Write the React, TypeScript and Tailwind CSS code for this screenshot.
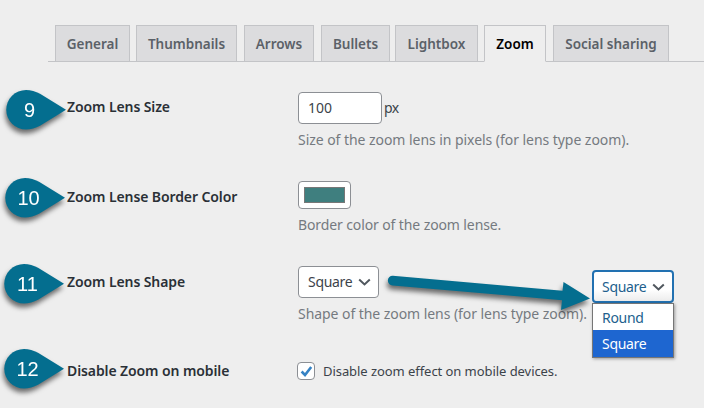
import type { ReactNode } from "react";
import clsx from "clsx";

const tabs = [
  { label: "General", className: "w-[75px] mr-[6px]" },
  { label: "Thumbnails", className: "w-[101px] mr-[7px]" },
  { label: "Arrows", className: "w-[70px] mr-[7px]" },
  { label: "Bullets", className: "w-[69px] mr-[5px]" },
  { label: "Lightbox", className: "w-[83px] mr-[6px]" },
  { label: "Zoom", className: "w-[62px] mr-[7px]", active: true },
  { label: "Social sharing", className: "w-[116px]" },
];

function Tabs() {
  return (
    <nav className="ml-12 flex h-[62px] items-end border-b border-[#c3c4c7] pl-[7px]">
      {tabs.map((tab) => (
        <button
          key={tab.label}
          className={clsx(
            "-mb-px flex h-[37px] shrink-0 items-center justify-center border border-[#c3c4c7] pt-[3px] text-[13.5px] font-semibold whitespace-nowrap",
            tab.active ? "border-b-[#eeeeee] bg-[#eeeeee] text-black" : "bg-[#dcdcde] text-[#5b6168]",
            tab.className
          )}
        >
          {tab.label}
        </button>
      ))}
    </nav>
  );
}

function Marker({ value, className }: { value: number; className: string }) {
  return (
    <svg
      width="60"
      height="40"
      viewBox="0 0 60 40"
      className={clsx("shrink-0 overflow-visible drop-shadow-[-1px_4px_2.5px_rgba(0,0,0,0.55)]", className)}
    >
      <path d="M20 0C25 0 29.5 1.4 34 3.8L60 19.8L34 35.7C29.5 38.1 25 39.5 20 39.5A19.75 19.75 0 0 1 20 0Z" fill="#046e8f" />
      <text
        x="23.5"
        y="27"
        textAnchor="middle"
        fill="#fff"
        fontSize="20"
        fontFamily="'Liberation Sans', Arial, sans-serif"
      >
        {value}
      </text>
    </svg>
  );
}

type RowProps = {
  step: number;
  label: string;
  className: string;
  markerClass: string;
  labelClass: string;
  children: ReactNode;
};

function Row({ step, label, className, markerClass, labelClass, children }: RowProps) {
  return (
    <div className={clsx("flex items-start", className)}>
      <div className="w-[67px] shrink-0">
        <Marker value={step} className={markerClass} />
      </div>
      <div className={clsx("w-[231px] shrink-0 text-sm leading-5 font-semibold tracking-[-0.1px] whitespace-nowrap text-[#2a3036]", labelClass)}>
        {label}
      </div>
      <div className="whitespace-nowrap">{children}</div>
    </div>
  );
}

function Chevron() {
  return (
    <svg width="13" height="8" viewBox="0 0 13 8" fill="none" stroke="#50575e" strokeWidth="2">
      <path d="M1.2 1.5L6.5 6.5L11.8 1.5" />
    </svg>
  );
}

export default function App() {
  return (
    <main className="relative h-[408px] w-[704px] overflow-hidden bg-[#eeeeee] font-['Noto_Sans','Open_Sans',sans-serif] text-sm text-[#3c434a]">
      <Tabs />

      <Row step={9} label="Zoom Lens Size" className="mt-[26px] h-[89px]" markerClass="ml-[6px] mt-[2px]" labelClass="mt-[9px]">
        <div className="flex items-center gap-[2px] pt-1">
          <div className="flex h-8 w-[84px] items-center rounded border border-[#8c8f94] bg-white pl-[9px]">100</div>
          <span className="tracking-[-0.5px]">px</span>
        </div>
        <p className="mt-[6px] leading-5 tracking-[-0.05px] text-[#757a80]">Size of the zoom lens in pixels (for lens type zoom).</p>
      </Row>

      <Row step={10} label="Zoom Lense Border Color" className="h-[86px]" markerClass="ml-[5px] mt-px" labelClass="mt-[10px]">
        <div className="mt-[4px] h-[28px] w-[53px] rounded border border-[#8c8f94] bg-white p-[5px]">
          <div className="h-full w-full border border-[#777] bg-[#3f7f7f]" />
        </div>
        <p className="mt-[6px] leading-5 tracking-[-0.11px] text-[#757a80]">Border color of the zoom lense.</p>
      </Row>

      <Row step={11} label="Zoom Lens Shape" className="h-[84px]" markerClass="ml-[4px] mt-px" labelClass="mt-[9px]">
        <div className="mt-[3px] flex h-8 w-[81px] items-center justify-between rounded border border-[#8c8f94] bg-white pr-[7px] pl-[9px]">
          <span className="tracking-[-0.3px]">Square</span>
          <Chevron />
        </div>
        <p className="mt-[6px] leading-5 tracking-[-0.06px] text-[#757a80]">Shape of the zoom lens (for lens type zoom).</p>
      </Row>

      <Row step={12} label="Disable Zoom on mobile" className="h-[61px]" markerClass="ml-[4px] mt-[2px]" labelClass="mt-[14px]">
        <div className="mt-[14px] flex items-center gap-2">
          <div className="-ml-px flex h-[18px] w-[18px] items-center justify-center rounded border border-[#8c8f94] bg-white">
            <svg width="13" height="13" viewBox="0 0 13 13" fill="none" stroke="#3582c4" strokeWidth="2.6">
              <path d="M1.6 6.5L5 10L11.2 2" />
            </svg>
          </div>
          <span className="text-[13px] leading-5 tracking-[-0.06px]">Disable zoom effect on mobile devices.</span>
        </div>
      </Row>

      {/* Expanded select */}
      <div className="absolute top-[270px] left-[592px] w-[82px] text-[#225f8d]">
        <div className="flex h-[33px] items-center justify-between rounded border-2 border-[#2271b1] bg-gradient-to-b from-white from-60% to-[#ececec] pr-[7px] pl-[8px]">
          <span className="tracking-[-0.3px]">Square</span>
          <Chevron />
        </div>
        <ul className="border border-[#767676] bg-white tracking-[-0.3px] shadow-[1px_1px_3px_rgba(0,0,0,0.35)]">
          <li className="h-[26px] pl-[9px] leading-[27px]">Round</li>
          <li className="h-[27px] bg-[#1e66d0] pl-[9px] leading-[27px] text-white">Square</li>
        </ul>
      </div>

      {/* Arrow towards the expanded select */}
      <svg
        width="220"
        height="56"
        viewBox="0 0 220 56"
        className="absolute top-[265px] left-[380px] overflow-visible drop-shadow-[-1px_4px_2.5px_rgba(0,0,0,0.55)]"
      >
        <path
          d="M12.8 10.8L182.5 25.8L183.5 17L210 33.5L181 45L182 35.2L12.5 20.4A4.8 4.8 0 0 1 12.8 10.8Z"
          fill="#046e8f"
        />
      </svg>
    </main>
  );
}
